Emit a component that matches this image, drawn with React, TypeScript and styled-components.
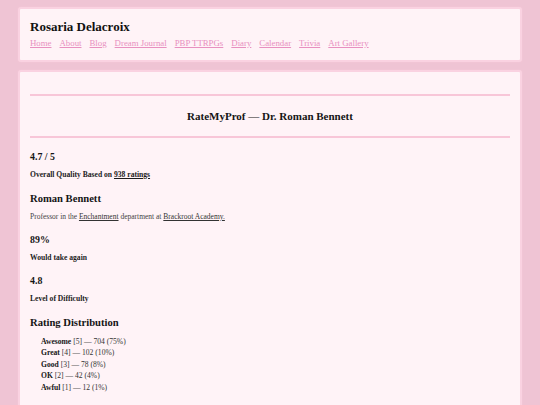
import React from "react";
import styled, { createGlobalStyle } from "styled-components";

const GlobalStyle = createGlobalStyle`
  html, body {
    margin: 0;
    padding: 0;
    background: #efc4d4;
    font-family: "Liberation Serif", "Times New Roman", serif;
    color: #1e1e1e;
  }
`;

const NAV = [
  "Home",
  "About",
  "Blog",
  "Dream Journal",
  "PBP TTRPGs",
  "Diary",
  "Calendar",
  "Trivia",
  "Art Gallery",
];

const DISTRIBUTION = [
  { label: "Awesome", stars: 5, count: 704, pct: 75 },
  { label: "Great", stars: 4, count: 102, pct: 10 },
  { label: "Good", stars: 3, count: 78, pct: 8 },
  { label: "OK", stars: 2, count: 42, pct: 4 },
  { label: "Awful", stars: 1, count: 12, pct: 1 },
];

function App() {
  return (
    <Page>
      <GlobalStyle />
      <Card>
        <SiteTitle>Rosaria Delacroix</SiteTitle>
        <Nav>
          {NAV.map((item) => (
            <NavLink key={item} href="#">
              {item}
            </NavLink>
          ))}
        </Nav>
      </Card>

      <MainCard>
        <Rule />
        <PageTitle>RateMyProf — Dr. Roman Bennett</PageTitle>
        <Rule />
        <Content>
          <Stat>
            <Value>4.7 / 5</Value>
            <Label>
              Overall Quality Based on{" "}
              <TextLink href="#" $color="#1c1c1c">
                938 ratings
              </TextLink>
            </Label>
          </Stat>
          <Stat>
            <Name>Roman Bennett</Name>
            <Info>
              Professor in the <TextLink href="#">Enchantment</TextLink>{" "}
              department at <TextLink href="#">Brackroot Academy.</TextLink>
            </Info>
          </Stat>
          <Stat>
            <Value>89%</Value>
            <Label>Would take again</Label>
          </Stat>
          <Stat>
            <Value>4.8</Value>
            <Label>Level of Difficulty</Label>
          </Stat>
          <Stat $gap={7}>
            <Name>Rating Distribution</Name>
            <DistList>
              {DISTRIBUTION.map((d) => (
                <DistItem key={d.label}>
                  <b>{d.label}</b> [{d.stars}] — {d.count} ({d.pct}%)
                </DistItem>
              ))}
            </DistList>
          </Stat>
        </Content>
      </MainCard>
    </Page>
  );
}

const Page = styled.div`
  display: flex;
  flex-direction: column;
  gap: 8px;
  padding: 7px 18px 0;
`;

const Card = styled.div`
  background: #fff3f7;
  border: 2px solid #fad2e1;
  border-radius: 3px;
  padding: 10px 10px 11px;
  box-shadow: 0 0 2px #f6c9da;
`;

const MainCard = styled(Card)`
  padding: 10px 10px 40px;
`;

const SiteTitle = styled.h1`
  margin: 0 0 2px;
  font-size: 13px;
  line-height: 16px;
  font-weight: bold;
  color: #111;
`;

const Nav = styled.nav`
  display: flex;
  gap: 8px;
  font-size: 8.8px;
  line-height: 12px;
`;

const NavLink = styled.a`
  color: #e890c0;
  text-decoration: underline;
`;

const Rule = styled.div`
  height: 2px;
  background: #f8c6d8;
  margin-top: 12px;
`;

const PageTitle = styled.h2`
  margin: 13px 0;
  text-align: center;
  font-size: 11px;
  line-height: 14px;
  font-weight: bold;
  color: #151515;
`;

const Content = styled.div`
  display: flex;
  flex-direction: column;
  gap: 12.5px;
  padding-top: 13px;
`;

const Stat = styled.section<{ $gap?: number }>`
  display: flex;
  flex-direction: column;
  gap: ${(p) => p.$gap ?? 6.5}px;
`;

const Value = styled.h3`
  margin: 0;
  font-size: 9.9px;
  line-height: 12px;
  font-weight: bold;
  color: #151515;
`;

const Name = styled.h2`
  margin: 0;
  font-size: 10.6px;
  line-height: 13px;
  font-weight: bold;
  color: #151515;
`;

const Label = styled.p`
  margin: 0;
  font-size: 7.6px;
  line-height: 10px;
  font-weight: bold;
  color: #1c1c1c;
`;

const Info = styled.p`
  margin: 0;
  font-size: 7.5px;
  line-height: 10px;
  color: #444;
`;

const TextLink = styled.a<{ $color?: string }>`
  color: ${(p) => p.$color ?? "#333"};
  text-decoration: underline;
`;

const DistList = styled.ul`
  list-style: none;
  margin: 0;
  padding: 0 0 0 11px;
`;

const DistItem = styled.li`
  font-size: 7.6px;
  line-height: 11.4px;
  color: #333;

  b {
    color: #151515;
  }
`;

export default App;
